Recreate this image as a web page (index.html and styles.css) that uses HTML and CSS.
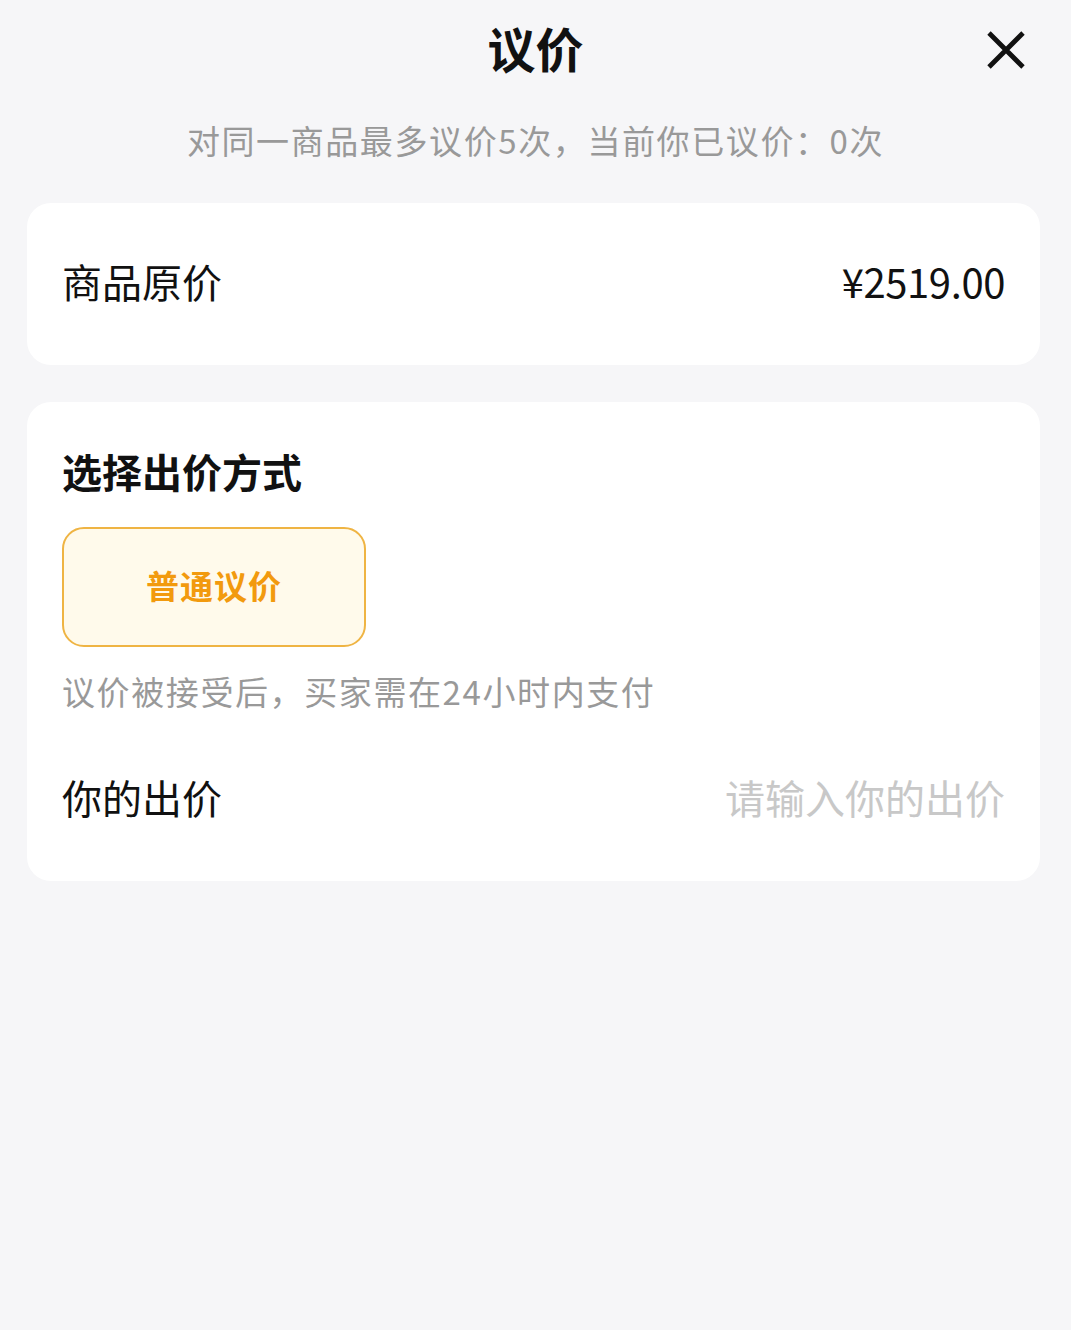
FILE: index.html
```html
<!DOCTYPE html>
<html>
<head>
	<title>议价</title>
	<link rel="stylesheet" href="styles.css">
</head>
<body>
	<div class="header">
		<span></span>
		<h2 class="title">议价</h2>
		<button class="close" type="button" aria-label="关闭">
			<svg width="38" height="38" viewBox="0 0 38 38">
				<path d="M2 2 L36 36 M36 2 L2 36" stroke="#111" stroke-width="4.8" fill="none"/>
			</svg>
		</button>
	</div>
	<p class="tip">对同一商品最多议价5次，当前你已议价：0次</p>

	<div class="card card-price">
		<span class="label">商品原价</span>
		<span class="price">¥2519.00</span>
	</div>

	<div class="card card-offer">
		<h3 class="section-title">选择出价方式</h3>
		<div class="options">
			<div class="option active">普通议价</div>
		</div>
		<p class="desc">议价被接受后，买家需在24小时内支付</p>
		<div class="row">
			<span class="label">你的出价</span>
			<input class="offer-input" type="text" placeholder="请输入你的出价">
		</div>
	</div>
</body>
</html>
```

FILE: styles.css
```css
body {
	margin: 0;
	background-color: #f6f6f8;
	font-family: "Noto Sans CJK SC", "Noto Sans", sans-serif;
	color: #111;
}
.header {
	display: grid;
	grid-template-columns: 1fr auto 1fr;
	align-items: center;
	height: 100px;
}
.title {
	margin: 0;
	padding-bottom: 6px;
	font-size: 48px;
	font-weight: 700;
	line-height: 60px;
}
.close {
	justify-self: end;
	margin-right: 46px;
	padding: 0;
	border: none;
	background: none;
	display: flex;
	cursor: pointer;
}
.tip {
	margin: 16px 0 39px;
	text-align: center;
	font-size: 33px;
	line-height: 48px;
	letter-spacing: 1.6px;
	color: #999;
}
.card {
	margin: 0 31px 0 27px;
	padding: 0 35px;
	background-color: #fff;
	border-radius: 24px;
}
.card-price {
	box-sizing: border-box;
	height: 162px;
	padding-bottom: 7px;
	display: flex;
	align-items: center;
	justify-content: space-between;
}
.label {
	font-size: 40px;
	line-height: 56px;
}
.price {
	font-size: 40px;
	line-height: 56px;
	letter-spacing: -0.4px;
}
.card-offer {
	margin-top: 37px;
	padding-top: 41px;
	padding-bottom: 56px;
}
.section-title {
	margin: 0;
	font-size: 40px;
	font-weight: 700;
	line-height: 56px;
}
.options {
	display: flex;
	gap: 20px;
	margin-top: 28px;
}
.option {
	box-sizing: border-box;
	width: 304px;
	height: 120px;
	padding-bottom: 5px;
	display: flex;
	align-items: center;
	justify-content: center;
	border: 2px solid #efb443;
	border-radius: 22px;
	background-color: #fffaeb;
	color: #f29a0e;
	font-size: 33px;
	font-weight: 700;
	letter-spacing: 1px;
}
.desc {
	margin: 20px 0 0;
	font-size: 33px;
	line-height: 48px;
	letter-spacing: 1.6px;
	color: #999;
}
.row {
	display: flex;
	align-items: center;
	justify-content: space-between;
	margin-top: 54px;
}
.offer-input {
	width: 400px;
	padding: 0;
	border: none;
	outline: none;
	text-align: right;
	font-family: inherit;
	font-size: 40px;
	line-height: 56px;
	color: #111;
	background: transparent;
}
.offer-input::placeholder {
	color: #c8c8c8;
}
```
